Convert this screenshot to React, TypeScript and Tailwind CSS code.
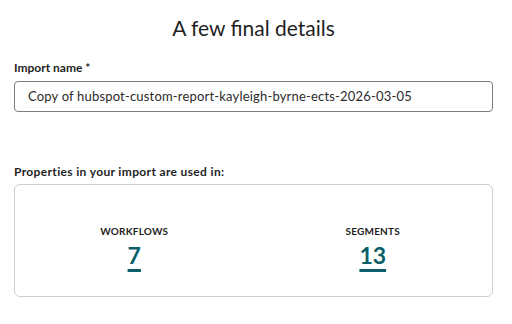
export default function App() {
  return (
    <div
      className="w-[512px] h-[324px] bg-white text-[#1f1f1f] pl-[14px] pr-[19px] pt-[14px]"
      style={{ fontFamily: "Lato, 'Noto Sans', sans-serif" }}
    >
      {/* Title */}

      <h1 className="text-center text-[21px] leading-[28px] text-[#1f1f1f]">
        A few final details
      </h1>

      {/* Import name */}

      <div className="mt-[18px]">
        <label className="block text-[12px] leading-[16px] font-bold text-[#1f1f1f]">
          Import name *
        </label>

        <div className="mt-[5px] h-[31px] border border-[#7d7d7d] rounded-[4px] flex items-center px-[13px]">
          <span className="text-[13px] tracking-[0.18px] text-[#2b2b2b]">
            Copy of hubspot-custom-report-kayleigh-byrne-ects-2026-03-05
          </span>
        </div>
      </div>

      {/* Usage */}

      <div className="mt-[52px]">
        <p className="text-[12px] leading-[16px] font-bold tracking-[0.35px] text-[#1f1f1f]">
          Properties in your import are used in:
        </p>

        <div className="mt-[4px] h-[113px] border border-[#cfcfcf] rounded-[6px] grid grid-cols-2 items-center pt-[12px]">
          <div className="flex flex-col items-center">
            <span className="text-[10px] font-bold tracking-[0.2px] text-[#1f1f1f]">
              WORKFLOWS
            </span>
            <a className="mt-[2px] text-[23px] font-bold text-[#0a5f69] underline decoration-[3px] underline-offset-[5px] leading-[28px]">
              7
            </a>
          </div>

          <div className="flex flex-col items-center">
            <span className="text-[10px] font-bold tracking-[0.2px] text-[#1f1f1f]">
              SEGMENTS
            </span>
            <a className="mt-[2px] text-[23px] font-bold text-[#0a5f69] underline decoration-[3px] underline-offset-[5px] leading-[28px]">
              13
            </a>
          </div>
        </div>
      </div>
    </div>
  );
}
